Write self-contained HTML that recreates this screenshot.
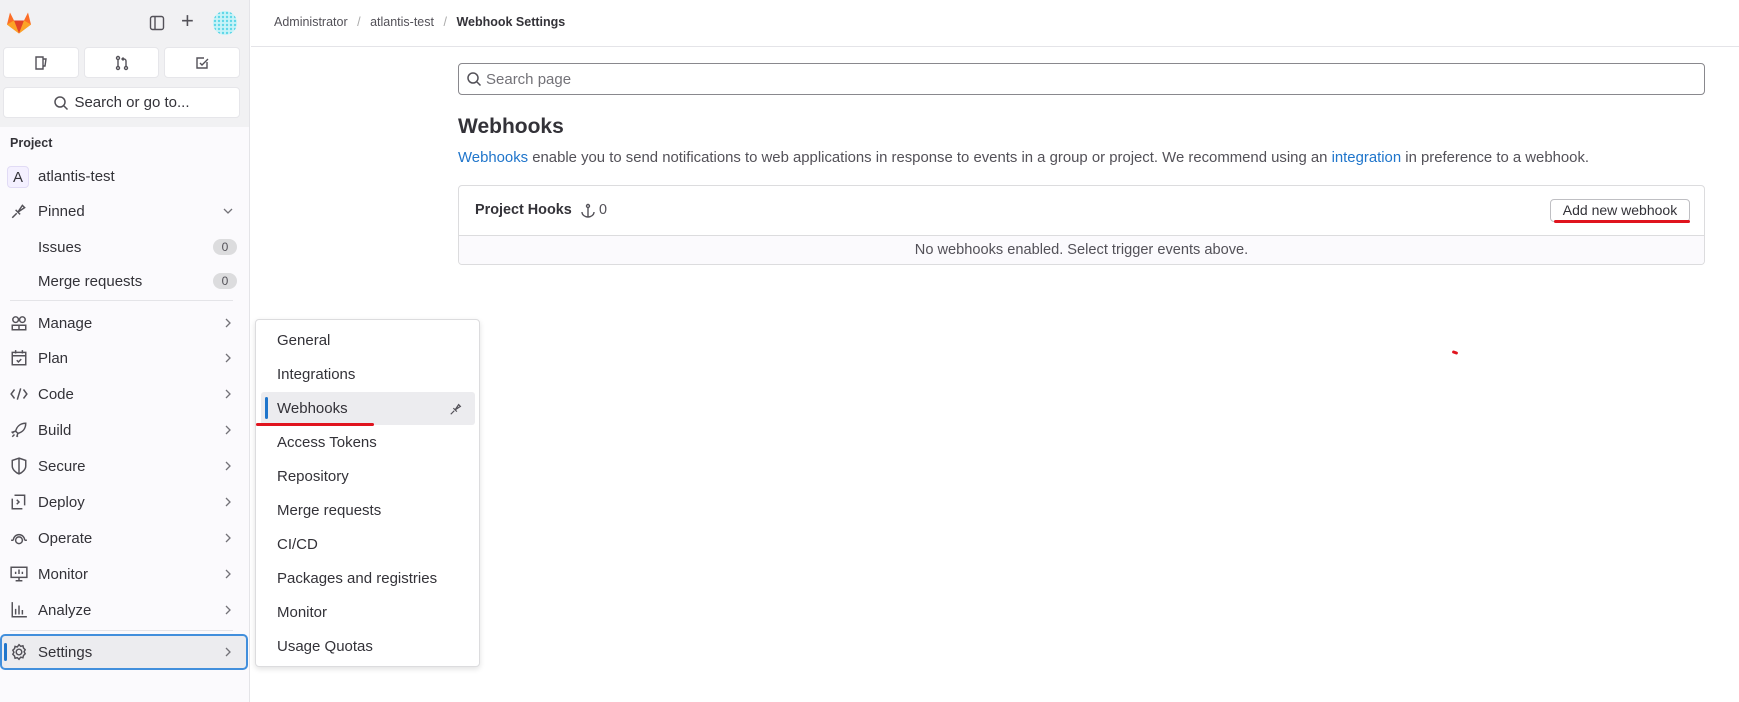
<!DOCTYPE html>
<html><head><meta charset="utf-8"><style>
*{box-sizing:border-box;margin:0;padding:0}
body{width:1739px;height:702px;overflow:hidden;background:#fff;font-family:"Liberation Sans",sans-serif;color:#333238;position:relative;font-size:15px}
.sb{position:absolute;left:0;top:0;width:250px;height:702px;background:#fbfafd;border-right:1px solid #e4e4e8}
.sbtop{position:absolute;left:0;top:0;width:249px;height:127px;background:#f1f1f3}
.btn{position:absolute;background:#fff;border:1px solid #e6e6ea;border-radius:4px;display:flex;align-items:center;justify-content:center;color:#535158}
.abs{position:absolute}
.nav{position:absolute;left:0;width:249px;height:34px;display:flex;align-items:center}
.nav .ic{position:absolute;left:10px;width:18px;height:18px}
.nav .t{position:absolute;left:38px;font-size:15px;color:#333238}
.nav .ch{position:absolute;left:224px;width:8px;height:10px}
.badge{position:absolute;left:213px;width:24px;height:16px;border-radius:8px;background:#dcdcde;font-size:12px;color:#535158;text-align:center;line-height:16px}
.fl{position:absolute;left:255px;top:319px;width:225px;height:348px;background:#fff;border:1px solid #dcdcde;border-radius:4px;box-shadow:0 2px 6px rgba(0,0,0,.12)}
.fi{position:absolute;left:21px;font-size:15px;color:#333238}
</style></head><body>
<svg width="0" height="0" style="position:absolute"><defs><symbol id="chev" viewBox="0 0 8 10"><path d="M2 1l4 4-4 4" fill="none" stroke="#737278" stroke-width="1.3"/></symbol></defs></svg>
<div class="sb"><div class="sbtop"></div>
<svg class="abs" style="left:6px;top:10px" width="26" height="25" viewBox="0 0 26 24"><path d="M13 23 L1 14 L4 2 L8 10 H18 L22 2 L25 14Z" fill="#fc6d26"/><path d="M13 23 L8 10 H18Z" fill="#e24329"/><path d="M1 14 L8 10 L13 23Z" fill="#fca326"/><path d="M25 14 L18 10 L13 23Z" fill="#fca326"/></svg>
<svg class="abs" style="left:149px;top:15px" width="16" height="16" viewBox="0 0 16 16" fill="none" stroke="#535158" stroke-width="1.4"><rect x="1.5" y="1.5" width="13" height="13" rx="2"/><path d="M6 2v12"/></svg>
<div class="abs" style="left:181px;top:8px;font-size:22px;color:#535158">+</div>
<svg class="abs" style="left:213px;top:11px" width="24" height="24"><defs><pattern id="p" width="4" height="4" patternUnits="userSpaceOnUse"><rect width="4" height="4" fill="#c8f3f8"/><circle cx="2" cy="2" r="1.2" fill="#5fd7e8"/></pattern></defs><circle cx="12" cy="12" r="12" fill="url(#p)"/></svg>
<div class="btn" style="left:3px;top:47px;width:76px;height:31px"><svg width="16" height="16" viewBox="0 0 16 16" fill="none" stroke="#535158" stroke-width="1.4"><path d="M3 2h7v12H3zM10 4h3l-1 7h-2"/></svg></div>
<div class="btn" style="left:84px;top:47px;width:75px;height:31px"><svg width="16" height="16" viewBox="0 0 16 16" fill="none" stroke="#535158" stroke-width="1.4"><circle cx="4" cy="3" r="1.5"/><circle cx="4" cy="13" r="1.5"/><circle cx="12" cy="13" r="1.5"/><path d="M4 4.5v7M12 11.5V6a2 2 0 0 0-2-2H8M9.5 2.5L8 4l1.5 1.5"/></svg></div>
<div class="btn" style="left:164px;top:47px;width:76px;height:31px"><svg width="16" height="16" viewBox="0 0 16 16" fill="none" stroke="#535158" stroke-width="1.4"><path d="M13 7v6H3V3h7M6 8l2 2 6-6"/></svg></div>
<div class="btn" style="left:3px;top:87px;width:237px;height:31px;font-size:15px;color:#333238"><svg width="16" height="16" viewBox="0 0 16 16" fill="none" stroke="#535158" stroke-width="1.5" style="margin-right:5px"><circle cx="7" cy="7" r="5"/><path d="M11 11l3.5 3.5"/></svg>Search or go to...</div>
<div class="abs" style="left:10px;top:136px;font-size:12.5px;font-weight:bold">Project</div>
<div class="abs" style="left:7px;top:166px;width:22px;height:22px;border:1px solid #e1dbf5;background:#f4f0ff;border-radius:4px;text-align:center;line-height:21px;font-size:15px">A</div>
<div class="abs" style="left:38px;top:168px;font-size:15px">atlantis-test</div>
<div class="nav" style="top:194px"><svg class="ic" viewBox="0 0 16 16" fill="none" stroke="#535158" stroke-width="1.3"><path d="M2 14l4-4M5 7l4 4M7 9l4-6 2 2-6 4"/></svg><span class="t">Pinned</span><svg class="ch" style="transform:rotate(90deg)"><use href="#chev"/></svg></div>
<div class="abs" style="left:38px;top:239px;font-size:15px">Issues</div><div class="badge" style="top:239px">0</div>
<div class="abs" style="left:38px;top:273px;font-size:15px">Merge requests</div><div class="badge" style="top:273px">0</div>
<div class="abs" style="left:10px;top:300px;width:223px;height:1px;background:#e4e4e8"></div>
<div class="nav" style="top:306px"><svg class="ic" viewBox="0 0 16 16" fill="none" stroke="#535158" stroke-width="1.3"><circle cx="5" cy="5" r="2.5"/><circle cx="11" cy="5" r="2.5"/><path d="M2 14v-4h6v4zM8 14v-4h6v4z"/></svg><span class="t">Manage</span><svg class="ch"><use href="#chev"/></svg></div>
<div class="nav" style="top:341px"><svg class="ic" viewBox="0 0 16 16" fill="none" stroke="#535158" stroke-width="1.3"><rect x="2" y="3" width="12" height="11"/><path d="M2 6h12M5 1v3M11 1v3M6 10l1.5 1.5L10 9"/></svg><span class="t">Plan</span><svg class="ch"><use href="#chev"/></svg></div>
<div class="nav" style="top:377px"><svg class="ic" viewBox="0 0 16 16" fill="none" stroke="#535158" stroke-width="1.3"><path d="M4 4L1 8l3 4M12 4l3 4-3 4M9.5 3l-3 10"/></svg><span class="t">Code</span><svg class="ch"><use href="#chev"/></svg></div>
<div class="nav" style="top:413px"><svg class="ic" viewBox="0 0 16 16" fill="none" stroke="#535158" stroke-width="1.3"><path d="M14 2c-5 0-8 3-9 7l2 2c4-1 7-4 7-9zM5 9l-3 1 1 1M7 11l-1 3 1-1M4 12l-2 2"/></svg><span class="t">Build</span><svg class="ch"><use href="#chev"/></svg></div>
<div class="nav" style="top:449px"><svg class="ic" viewBox="0 0 16 16" fill="none" stroke="#535158" stroke-width="1.3"><path d="M8 1l6 2v5c0 3-3 6-6 7-3-1-6-4-6-7V3zM8 1v14"/></svg><span class="t">Secure</span><svg class="ch"><use href="#chev"/></svg></div>
<div class="nav" style="top:485px"><svg class="ic" viewBox="0 0 16 16" fill="none" stroke="#535158" stroke-width="1.3"><path d="M4 2h9v9M2 5v9h9M6 6l2 2-2 2"/></svg><span class="t">Deploy</span><svg class="ch"><use href="#chev"/></svg></div>
<div class="nav" style="top:521px"><svg class="ic" viewBox="0 0 16 16" fill="none" stroke="#535158" stroke-width="1.3"><path d="M3 10a5 5 0 1 1 10 0"/><circle cx="8" cy="10" r="3"/><path d="M1 10h2M13 10h2"/></svg><span class="t">Operate</span><svg class="ch"><use href="#chev"/></svg></div>
<div class="nav" style="top:557px"><svg class="ic" viewBox="0 0 16 16" fill="none" stroke="#535158" stroke-width="1.3"><rect x="1" y="2" width="14" height="9"/><path d="M5 14h6M8 11v3M5 8V6M8 8V4M11 8V6"/></svg><span class="t">Monitor</span><svg class="ch"><use href="#chev"/></svg></div>
<div class="nav" style="top:593px"><svg class="ic" viewBox="0 0 16 16" fill="none" stroke="#535158" stroke-width="1.3"><path d="M2 1v13h13M5 12V7M8 12V4M11 12V8"/></svg><span class="t">Analyze</span><svg class="ch"><use href="#chev"/></svg></div>
<div class="abs" style="left:10px;top:630px;width:223px;height:1px;background:#e4e4e8"></div>
<div class="nav" style="top:634px;left:0;width:248px;height:36px;background:#ececef;border:2px solid #428fdc;border-radius:5px"><div class="abs" style="left:2px;top:7px;width:3px;height:18px;background:#1f75cb;border-radius:2px"></div><svg class="ic" style="left:8px" viewBox="0 0 16 16" fill="none" stroke="#535158" stroke-width="1.3"><circle cx="8" cy="8" r="2.5"/><path d="M8 1.5l1.5 1.5 2-.5.5 2 1.5 1.5-1 1.8 1 1.8-1.5 1.5-.5 2-2-.5L8 14.5 6.5 13l-2 .5-.5-2L2.5 10l1-1.8-1-1.8L4 5l.5-2 2 .5z"/></svg><span class="t" style="left:36px">Settings</span><svg class="ch" style="left:222px"><use href="#chev"/></svg></div>
</div>
<div class="fl">
<div class="fi" style="top:12px">General</div>
<div class="fi" style="top:46px">Integrations</div>
<div class="abs" style="left:5px;top:72px;width:214px;height:33px;background:#ececef;border-radius:3px"></div>
<div class="abs" style="left:9px;top:77px;width:3px;height:22px;background:#1f75cb;border-radius:2px"></div>
<div class="fi" style="top:80px">Webhooks</div>
<svg class="abs" style="left:193px;top:82px" width="14" height="14" viewBox="0 0 16 16" fill="none" stroke="#535158" stroke-width="1.4"><path d="M2 14l4-4M5 7l4 4M7 9l4-6 2 2-6 4"/></svg>
<div class="abs" style="left:0;top:103px;width:118px;height:3px;background:#e0141e;border-radius:2px"></div>
<div class="fi" style="top:114px">Access Tokens</div>
<div class="fi" style="top:148px">Repository</div>
<div class="fi" style="top:182px">Merge requests</div>
<div class="fi" style="top:216px">CI/CD</div>
<div class="fi" style="top:250px">Packages and registries</div>
<div class="fi" style="top:284px">Monitor</div>
<div class="fi" style="top:318px">Usage Quotas</div>
</div>
<div class="abs" style="left:274px;top:15px;font-size:12.5px;color:#535158">Administrator <span style="color:#aaa;margin:0 6px">/</span> atlantis-test <span style="color:#aaa;margin:0 6px">/</span> <b style="color:#333238">Webhook Settings</b></div>
<div class="abs" style="left:251px;top:46px;width:1488px;height:1px;background:#e4e4e8"></div>
<div class="abs" style="left:458px;top:63px;width:1247px;height:32px;border:1px solid #89888d;border-radius:4px"></div>
<svg class="abs" style="left:466px;top:71px" width="16" height="16" viewBox="0 0 16 16" fill="none" stroke="#535158" stroke-width="1.5"><circle cx="7" cy="7" r="5"/><path d="M11 11l3.5 3.5"/></svg>
<div class="abs" style="left:486px;top:71px;font-size:15px;color:#737278">Search page</div>
<div class="abs" style="left:458px;top:115px;font-size:21px;font-weight:bold">Webhooks</div>
<div class="abs" style="left:458px;top:150px;font-size:14.9px;color:#535158"><span style="color:#1f75cb">Webhooks</span> enable you to send notifications to web applications in response to events in a group or project. We recommend using an <span style="color:#1f75cb">integration</span> in preference to a webhook.</div>
<div class="abs" style="left:458px;top:185px;width:1247px;height:80px;border:1px solid #dcdcde;border-radius:4px;overflow:hidden">
<div class="abs" style="left:0;top:49px;width:100%;height:31px;background:#fbfafd;border-top:1px solid #dcdcde;text-align:center;line-height:29px;font-size:14.6px;color:#535158">No webhooks enabled. Select trigger events above.</div>
<div class="abs" style="left:16px;top:16px;font-size:14.4px;font-weight:bold">Project Hooks</div>
<svg class="abs" style="left:121px;top:17px" width="16" height="16" viewBox="0 0 16 16" fill="none" stroke="#535158" stroke-width="1.4"><circle cx="8" cy="3" r="1.5"/><path d="M8 4.5V14M2 9c0 3 3 5 6 5s6-2 6-5"/></svg>
<div class="abs" style="left:140px;top:16px;font-size:14.4px;color:#535158">0</div>
<div class="abs" style="left:1091px;top:13px;width:140px;height:23px;border:1px solid #bfbfc3;border-radius:4px;text-align:center;line-height:21px;font-size:14px;background:#fff">Add new webhook</div>
</div>
<div class="abs" style="left:1554px;top:220px;width:136px;height:3px;background:#e0141e;border-radius:2px"></div>
<div class="abs" style="left:1452px;top:351px;width:6px;height:3px;background:#e0141e;border-radius:2px;transform:rotate(20deg)"></div>
</body></html>
